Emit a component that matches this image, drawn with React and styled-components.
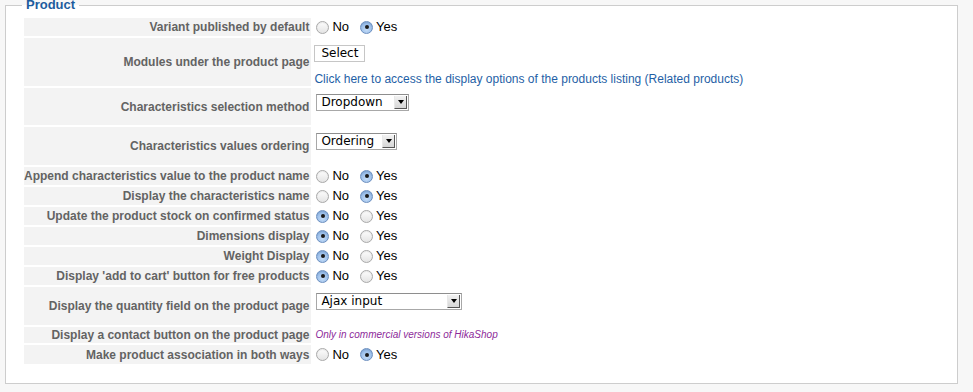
import React from "react";
import styled, { createGlobalStyle } from "styled-components";

const GlobalStyle = createGlobalStyle`
  html, body { margin: 0; padding: 0; background: #f7f7f7; }
  body { font-family: "Liberation Sans", Arial, sans-serif; }
`;

const Page = styled.div`
  padding: 0 15px 9px 5px;
`;

const Fieldset = styled.fieldset`
  margin: 0;
  border: 1px solid #cdcdcd;
  background: #fff;
  padding: 6px 16px 17px 16px;
  min-width: 0;
`;

const Legend = styled.legend`
  padding: 0 4px;
  font: bold 13px/10px "Liberation Sans", Arial, sans-serif;
  color: #1d5c9e;
`;

const Table = styled.table`
  border-collapse: separate;
  border-spacing: 2px;
`;

const Row = styled.tr`
  height: ${(p) => p.$h}px;
`;

const LabelCell = styled.td`
  width: 283px;
  padding: 0 2px 0 0;
  background: #f3f3f3;
  text-align: right;
  vertical-align: middle;
  font: bold 12px/14px "Liberation Sans", Arial, sans-serif;
  color: #636363;
  white-space: nowrap;
`;

const ValueCell = styled.td`
  padding: ${(p) => p.$pt || 0}px 0 0 0;
  vertical-align: ${(p) => (p.$pt ? "top" : "middle")};
  font: 13px/14px "Liberation Sans", Arial, sans-serif;
  color: #000;
  white-space: nowrap;
`;

const RadioGroup = styled.div`
  display: flex;
  align-items: center;
  gap: 11px;
  padding-left: 3px;
`;

const RadioOption = styled.label`
  display: inline-flex;
  align-items: center;
  gap: 3px;
  font: 13px/14px "Liberation Sans", Arial, sans-serif;
  color: #000;
`;

const RadioCircle = styled.span`
  position: relative;
  display: inline-block;
  width: 13px;
  height: 13px;
  box-sizing: border-box;
  border-radius: 50%;
  border: 1px solid ${(p) => (p.$checked ? "#6c8fbf" : "#a9a9a9")};
  background: ${(p) =>
    p.$checked
      ? "radial-gradient(circle at 50% 70%, #c4dcf7 0%, #9dc0ea 55%, #7aa6dc 100%)"
      : "linear-gradient(#fdfdfd, #e4e4e4)"};
  box-shadow: inset 0 1px 1px rgba(0, 0, 0, 0.08);
  &::after {
    content: "";
    display: ${(p) => (p.$checked ? "block" : "none")};
    position: absolute;
    left: 50%;
    top: 50%;
    width: 4px;
    height: 4px;
    margin: -2px 0 0 -2px;
    border-radius: 50%;
    background: #1a1a1a;
  }
`;

const Button = styled.button`
  display: block;
  box-sizing: border-box;
  width: 51px;
  height: 17px;
  margin: 0 0 0 1px;
  padding: 0;
  border: 1px solid #c6c6c6;
  background: #fff;
  font: 12px/15px "DejaVu Sans", "Liberation Sans", sans-serif;
  color: #000;
`;

const Link = styled.a`
  display: block;
  margin-top: 10px;
  margin-left: 1px;
  font: 12px/14px "Liberation Sans", Arial, sans-serif;
  color: #1f5fa6;
  text-decoration: none;
`;

const SelectBox = styled.div`
  display: flex;
  align-items: stretch;
  box-sizing: border-box;
  width: ${(p) => p.$w}px;
  height: 17px;
  margin-left: 3px;
  border: 1px solid #a8a8a8;
  border-top-color: #8e8e8e;
  background: #fff;
  padding: 1px;
`;

const SelectText = styled.span`
  flex: 1;
  padding-left: 3px;
  font: 12px/13px "DejaVu Sans", "Liberation Sans", sans-serif;
  color: #000;
`;

const SelectArrow = styled.span`
  display: flex;
  align-items: center;
  justify-content: center;
  width: 11px;
  background: linear-gradient(#f2f2f2, #d6d6d6);
  border-right: 1px solid #555;
  border-bottom: 1px solid #555;
  border-left: 1px solid #e8e8e8;
  &::before {
    content: "";
    border-left: 3px solid transparent;
    border-right: 3px solid transparent;
    border-top: 4px solid #000;
  }
`;

const Note = styled.span`
  display: block;
  padding-left: 2px;
  font: italic 10px/12px "Liberation Sans", Arial, sans-serif;
  color: #8d2a9a;
`;

const YesNo = ({ value }) => (
  <RadioGroup>
    <RadioOption>
      <RadioCircle $checked={!value} />
      No
    </RadioOption>
    <RadioOption>
      <RadioCircle $checked={value} />
      Yes
    </RadioOption>
  </RadioGroup>
);

const Select = ({ width, children }) => (
  <SelectBox $w={width}>
    <SelectText>{children}</SelectText>
    <SelectArrow />
  </SelectBox>
);

export default function App() {
  return (
    <>
      <GlobalStyle />
      <Page>
        <Fieldset>
          <Legend>Product</Legend>
          <Table>
            <tbody>
              <Row $h={18}>
                <LabelCell>Variant published by default</LabelCell>
                <ValueCell><YesNo value={true} /></ValueCell>
              </Row>
              <Row $h={48}>
                <LabelCell>Modules under the product page</LabelCell>
                <ValueCell $pt={7}>
                  <Button>Select</Button>
                  <Link href="#">Click here to access the display options of the products listing (Related products)</Link>
                </ValueCell>
              </Row>
              <Row $h={37}>
                <LabelCell>Characteristics selection method</LabelCell>
                <ValueCell $pt={6}><Select width={93}>Dropdown</Select></ValueCell>
              </Row>
              <Row $h={38}>
                <LabelCell>Characteristics values ordering</LabelCell>
                <ValueCell $pt={6}><Select width={81}>Ordering</Select></ValueCell>
              </Row>
              <Row $h={18}>
                <LabelCell>Append characteristics value to the product name</LabelCell>
                <ValueCell><YesNo value={true} /></ValueCell>
              </Row>
              <Row $h={18}>
                <LabelCell>Display the characteristics name</LabelCell>
                <ValueCell><YesNo value={true} /></ValueCell>
              </Row>
              <Row $h={18}>
                <LabelCell>Update the product stock on confirmed status</LabelCell>
                <ValueCell><YesNo value={false} /></ValueCell>
              </Row>
              <Row $h={18}>
                <LabelCell>Dimensions display</LabelCell>
                <ValueCell><YesNo value={false} /></ValueCell>
              </Row>
              <Row $h={18}>
                <LabelCell>Weight Display</LabelCell>
                <ValueCell><YesNo value={false} /></ValueCell>
              </Row>
              <Row $h={18}>
                <LabelCell>Display 'add to cart' button for free products</LabelCell>
                <ValueCell><YesNo value={false} /></ValueCell>
              </Row>
              <Row $h={38}>
                <LabelCell>Display the quantity field on the product page</LabelCell>
                <ValueCell $pt={6}><Select width={146}>Ajax input</Select></ValueCell>
              </Row>
              <Row $h={16}>
                <LabelCell>Display a contact button on the product page</LabelCell>
                <ValueCell><Note>Only in commercial versions of HikaShop</Note></ValueCell>
              </Row>
              <Row $h={19}>
                <LabelCell>Make product association in both ways</LabelCell>
                <ValueCell><YesNo value={true} /></ValueCell>
              </Row>
            </tbody>
          </Table>
        </Fieldset>
      </Page>
    </>
  );
}
